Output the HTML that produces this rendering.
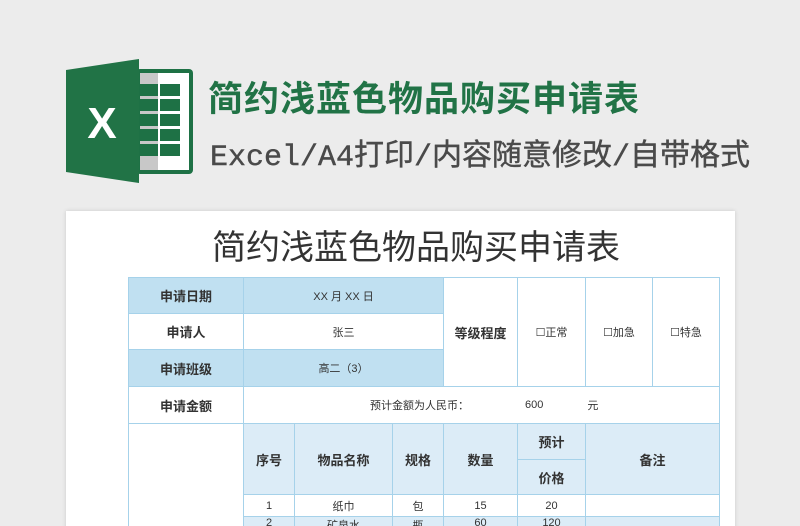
<!DOCTYPE html>
<html><head><meta charset="utf-8"><style>
html,body{margin:0;width:800px;height:526px;overflow:hidden}
body{background:#ececec;position:relative;font-family:"Liberation Sans","Noto Sans CJK SC",sans-serif}
.a{position:absolute}
.c{position:absolute;display:flex;align-items:center;justify-content:center;box-sizing:border-box;border:1px solid #a6d2ea;color:#333;font-size:11px}
.b{font-weight:bold;font-size:13px}
.d{background:#c0e0f1}
.l{background:#dcecf7}
</style></head><body>
<svg class="a" style="left:60px;top:55px" width="140" height="130">
<rect x="76" y="14" width="57" height="105" rx="4" fill="#1e7145"/>
<rect x="80" y="18" width="49" height="97" fill="#fff"/>
<rect x="80" y="18" width="18" height="97" fill="#c8c8c8"/>
<g fill="#1e7145">
<rect x="80" y="29" width="18" height="12"/><rect x="100" y="29" width="20" height="12"/>
<rect x="80" y="44" width="18" height="12"/><rect x="100" y="44" width="20" height="12"/>
<rect x="80" y="59" width="18" height="12"/><rect x="100" y="59" width="20" height="12"/>
<rect x="80" y="74" width="18" height="12"/><rect x="100" y="74" width="20" height="12"/>
<rect x="80" y="89" width="18" height="12"/><rect x="100" y="89" width="20" height="12"/>
</g>
<polygon points="6,15 79,4 79,128 6,117" fill="#217346"/>
<text x="42" y="83" text-anchor="middle" fill="#fff" font-size="44" font-weight="bold" font-family="Liberation Sans">X</text>
</svg>
<div class="a" style="left:208px;top:71px;font-size:35px;font-weight:bold;color:#217346;letter-spacing:1px;white-space:nowrap">简约浅蓝色物品购买申请表</div>
<div class="a" style="left:210px;top:130px;font-size:30px;color:#4a4a4a;font-family:'Liberation Mono','Noto Sans CJK SC',monospace;white-space:nowrap;-webkit-text-stroke:0.4px #4a4a4a">Excel/A4打印/内容随意修改/自带格式</div>
<div class="a" style="left:66px;top:211px;width:669px;height:330px;background:#fff;box-shadow:0 0 4px rgba(0,0,0,.15)"></div>
<div class="a" style="left:212px;top:220px;font-size:34px;color:#333;white-space:nowrap">简约浅蓝色物品购买申请表</div>

<div class="c d b" style="left:128px;top:277px;width:116px;height:37px">申请日期</div>
<div class="c d" style="left:243px;top:277px;width:201px;height:37px">XX 月 XX 日</div>
<div class="c b" style="left:128px;top:313px;width:116px;height:37px">申请人</div>
<div class="c" style="left:243px;top:313px;width:201px;height:37px">张三</div>
<div class="c d b" style="left:128px;top:349px;width:116px;height:38px">申请班级</div>
<div class="c d" style="left:243px;top:349px;width:201px;height:38px">高二（3）</div>
<div class="c b" style="left:443px;top:277px;width:75px;height:110px">等级程度</div>
<div class="c" style="left:517px;top:277px;width:69px;height:110px">☐正常</div>
<div class="c" style="left:585px;top:277px;width:68px;height:110px">☐加急</div>
<div class="c" style="left:652px;top:277px;width:68px;height:110px">☐特急</div>
<div class="c b" style="left:128px;top:386px;width:116px;height:38px">申请金额</div>
<div class="c" style="left:243px;top:386px;width:477px;height:38px;justify-content:flex-start;padding-left:126px">预计金额为人民币：<span style="margin-left:56px">600</span><span style="margin-left:44px">元</span></div>
<div class="c" style="left:128px;top:423px;width:116px;height:110px"></div>
<div class="c l b" style="left:243px;top:423px;width:52px;height:72px">序号</div>
<div class="c l b" style="left:294px;top:423px;width:99px;height:72px">物品名称</div>
<div class="c l b" style="left:392px;top:423px;width:52px;height:72px">规格</div>
<div class="c l b" style="left:443px;top:423px;width:75px;height:72px">数量</div>
<div class="c l b" style="left:517px;top:423px;width:69px;height:37px">预计</div>
<div class="c l b" style="left:517px;top:459px;width:69px;height:36px">价格</div>
<div class="c l b" style="left:585px;top:423px;width:135px;height:72px">备注</div>
<div class="c" style="left:243px;top:494px;width:52px;height:23px">1</div>
<div class="c" style="left:294px;top:494px;width:99px;height:23px">纸巾</div>
<div class="c" style="left:392px;top:494px;width:52px;height:23px">包</div>
<div class="c" style="left:443px;top:494px;width:75px;height:23px">15</div>
<div class="c" style="left:517px;top:494px;width:69px;height:23px">20</div>
<div class="c" style="left:585px;top:494px;width:135px;height:23px"></div>
<div class="c l" style="left:243px;top:516px;width:52px;height:23px;align-items:flex-start">2</div>
<div class="c l" style="left:294px;top:516px;width:99px;height:23px;align-items:flex-start">矿泉水</div>
<div class="c l" style="left:392px;top:516px;width:52px;height:23px;align-items:flex-start">瓶</div>
<div class="c l" style="left:443px;top:516px;width:75px;height:23px;align-items:flex-start">60</div>
<div class="c l" style="left:517px;top:516px;width:69px;height:23px;align-items:flex-start">120</div>
<div class="c l" style="left:585px;top:516px;width:135px;height:23px"></div>
</body></html>
